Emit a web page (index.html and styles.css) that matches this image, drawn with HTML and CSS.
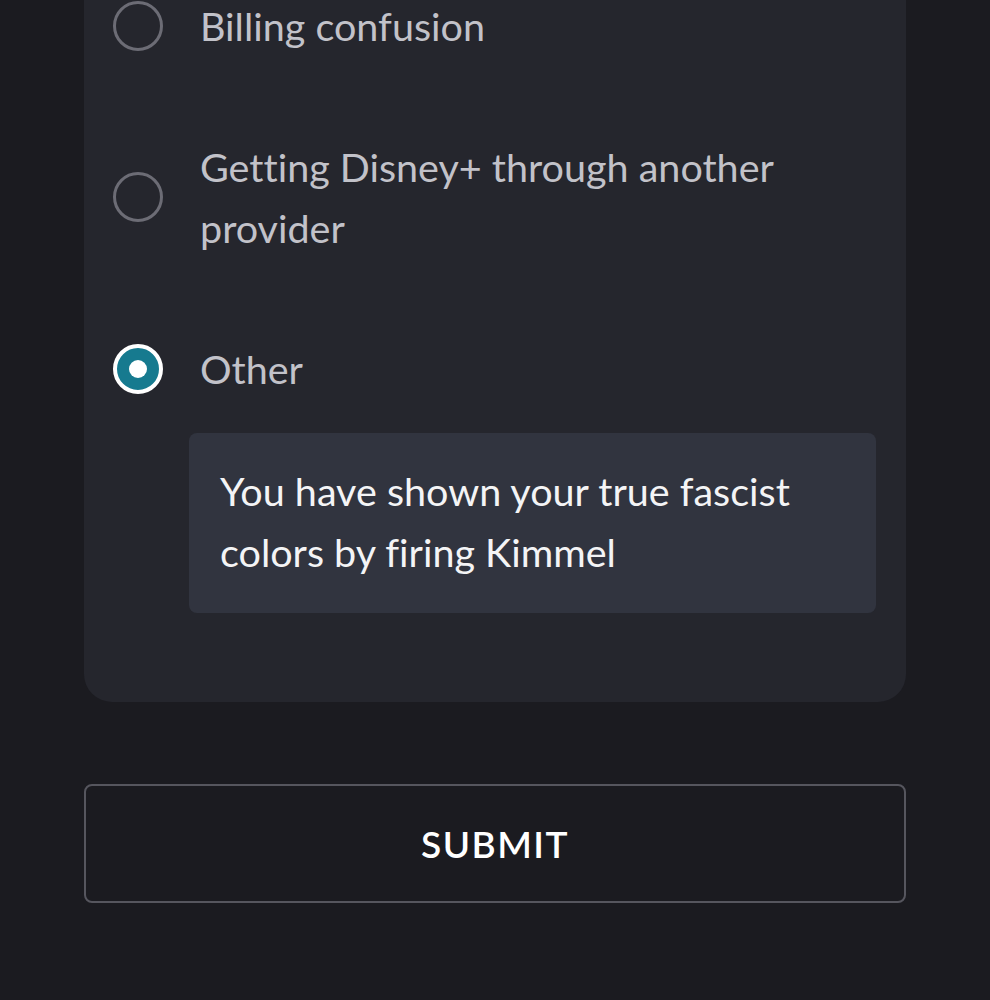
FILE: index.html
```html
<!DOCTYPE html>
<html lang="en">
<head>
<meta charset="utf-8">
<link rel="stylesheet" href="styles.css">
</head>
<body>
<main class="page">
  <section class="card">
    <div class="options">
      <label class="option">
        <span class="radio"></span>
        <span class="label">Billing confusion</span>
      </label>
      <label class="option">
        <span class="radio"></span>
        <span class="label">Getting Disney+ through another provider</span>
      </label>
      <label class="option">
        <span class="radio radio-on"><span class="dot"></span></span>
        <span class="label">Other</span>
      </label>
    </div>
    <div class="answer">You have shown your true fascist colors by firing Kimmel</div>
  </section>
  <button class="submit">SUBMIT</button>
</main>
</body>
</html>
```
FILE: styles.css
```css
html, body {
  margin: 0;
  padding: 0;
  background: #1b1b20;
}
body {
  font-family: Lato, "Noto Sans", sans-serif;
  font-size: 39.5px;
  line-height: 61px;
  font-variant-ligatures: none;
  overflow: hidden;
}
.page {
  padding: 0 84px;
}
.card {
  background: #25262d;
  border-radius: 0 0 28px 28px;
  margin-top: -40px;
  padding: 35px 30px 89px 29px;
}
.options {
  display: flex;
  flex-direction: column;
  gap: 80px;
}
.option {
  display: flex;
  align-items: center;
  gap: 37px;
}
.radio {
  flex: 0 0 auto;
  width: 50px;
  height: 50px;
  box-sizing: border-box;
  border: 3px solid #6c6c75;
  border-radius: 50%;
  display: flex;
  align-items: center;
  justify-content: center;
}
.radio-on {
  border: 4px solid #ffffff;
  background: #167a8f;
}
.dot {
  width: 18px;
  height: 18px;
  border-radius: 50%;
  background: #ffffff;
}
.label {
  color: #c2c2c9;
}
.answer {
  margin: 34px 0 0 76px;
  background: #31343f;
  border-radius: 8px;
  padding: 27px 31px 31px 31px;
  color: #f4f4f6;
}
.submit {
  display: block;
  width: 100%;
  margin-top: 82px;
  height: 119px;
  background: transparent;
  border: 2px solid #56565e;
  border-radius: 8px;
  color: #ffffff;
  font-family: Lato, "Noto Sans", sans-serif;
  font-size: 37px;
  font-weight: 600;
  letter-spacing: 1.5px;
}
```
